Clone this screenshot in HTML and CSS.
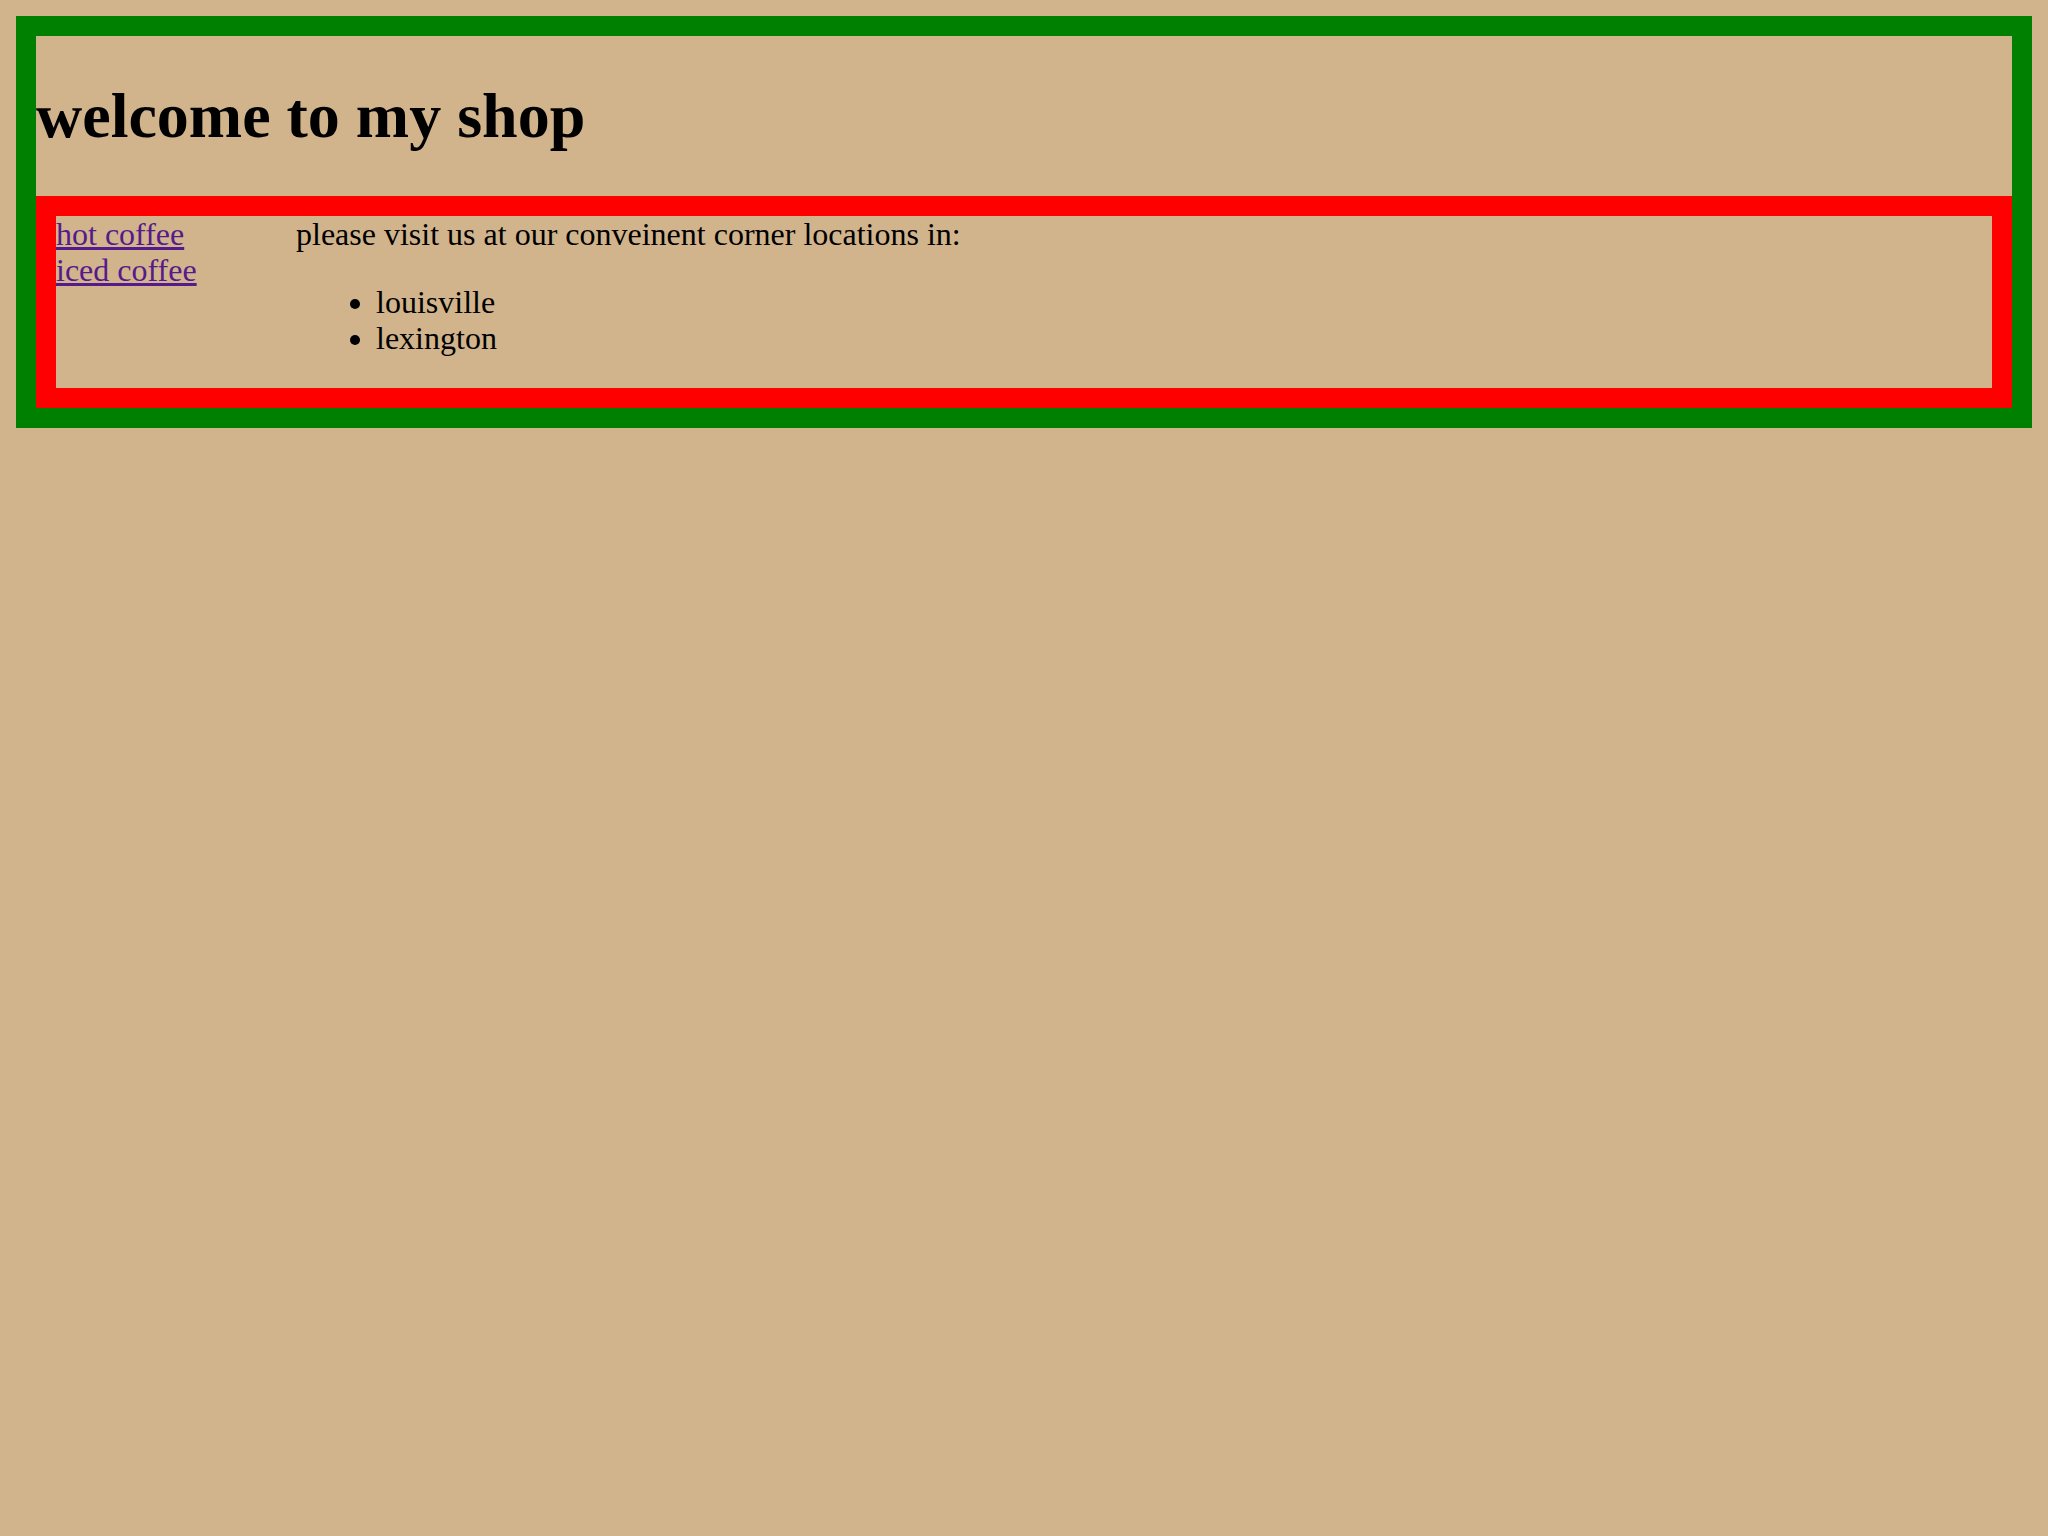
FILE: index.html
```html
<!DOCTYPE html>
<html>
<head>
<meta charset="utf-8">
<title>my shop</title>
<link rel="stylesheet" href="styles.css">
</head>
<body class="page">
<div class="shop">
  <h1 class="title">welcome to my shop</h1>
  <div class="main">
    <nav class="nav">
      <a class="nav-link" href="#hot">hot coffee</a>
      <a class="nav-link" href="#iced">iced coffee</a>
    </nav>
    <div class="content">
      <p class="intro">please visit us at our conveinent corner locations in:</p>
      <ul class="locations">
        <li>louisville</li>
        <li>lexington</li>
      </ul>
    </div>
  </div>
</div>
</body>
</html>
```
FILE: styles.css
```css
html, body {
  background: #d2b48c;
}
.page {
  margin: 16px;
  font-family: "Liberation Serif", "Times New Roman", serif;
  color: #000;
}
.shop {
  border: 20px solid #008000;
}
.title {
  font-size: 64px;
  font-weight: bold;
  line-height: 74px;
  margin: 43px 0;
}
.main {
  border: 20px solid #ff0000;
  display: flex;
  font-size: 32px;
  line-height: 36px;
}
.nav {
  width: 240px;
  flex: none;
  display: flex;
  flex-direction: column;
}
.nav-link {
  color: #551a8b;
  text-decoration: underline;
}
.content {
  flex: 1;
}
.intro {
  margin: 0;
}
.locations {
  margin: 32px 0;
  padding-left: 80px;
}
```
